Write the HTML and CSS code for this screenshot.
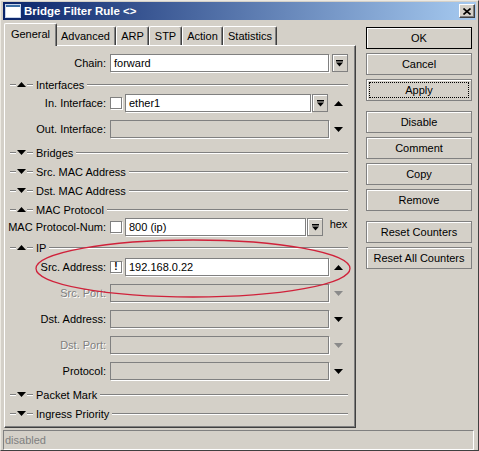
FILE: index.html
```html
<!doctype html>
<html>
<head>
    <meta charset="utf-8">
    <title>Bridge Filter Rule</title>

<link rel="stylesheet" href="styles.css">

</head>
<body>

<div class="win">
    <div class="title">
        <svg class="ico" width="16" height="14" viewBox="0 0 16 14"><rect x="0.5" y="0.5" width="15" height="13" fill="#fff" stroke="#c8d4e8"/><rect x="1" y="1" width="14" height="2" fill="#3a6ea5"/></svg>
        <span class="ttl">Bridge Filter Rule &lt;&gt;</span>
        <span class="close"><svg width="8" height="7" viewBox="0 0 8 7"><path d="M0.5 0.5L7.5 6.5M7.5 0.5L0.5 6.5" stroke="#000" stroke-width="1.6"/></svg></span>
    </div>

    <div class="main">
        <div class="left">
            <ul class="tabs">
                <li class="on t-gen">General</li>
                <li class="t-adv">Advanced</li>
                <li class="t-arp">ARP</li>
                <li class="t-stp">STP</li>
                <li class="t-act">Action</li>
                <li class="t-sta">Statistics</li>
            </ul>
            <div class="panel">
                <div class="row first">
                    <span class="lbl">Chain:</span>
                    <div class="fld"><span class="inp">forward</span></div>
                    <span class="tail left"><span class="dd"><svg width="7" height="7" viewBox="0 0 7 7"><rect x="0" y="0" width="7" height="1.5"/><polygon points="0,2.5 7,2.5 3.5,6.5"/></svg></span></span>
                </div>

                <div class="sec s-if"><i class="ln s"></i><svg width="9" height="5" viewBox="0 0 9 5"><polygon points="0,5 4.5,0 9,5"/></svg><i class="ln s"></i><span class="nm">Interfaces</span><i class="ln f"></i></div>
                <div class="row flush">
                    <span class="lbl">In. Interface:</span>
                    <div class="fld"><span class="cb"></span><span class="inp">ether1</span><span class="dd r1"><svg width="7" height="7" viewBox="0 0 7 7"><rect x="0" y="0" width="7" height="1.5"/><polygon points="0,2.5 7,2.5 3.5,6.5"/></svg></span></div>
                    <span class="tail"><svg width="9" height="5" viewBox="0 0 9 5"><polygon points="0,5 4.5,0 9,5"/></svg></span>
                </div>
                <div class="row">
                    <span class="lbl">Out. Interface:</span>
                    <div class="fld"><span class="inp off"></span></div>
                    <span class="tail"><svg width="9" height="5" viewBox="0 0 9 5"><polygon points="0,0 9,0 4.5,5"/></svg></span>
                </div>

                <div class="sec s-br"><i class="ln s"></i><svg width="9" height="5" viewBox="0 0 9 5"><polygon points="0,0 9,0 4.5,5"/></svg><i class="ln s"></i><span class="nm">Bridges</span><i class="ln f"></i></div>
                <div class="sec"><i class="ln s"></i><svg width="9" height="5" viewBox="0 0 9 5"><polygon points="0,0 9,0 4.5,5"/></svg><i class="ln s"></i><span class="nm">Src. MAC Address</span><i class="ln f"></i></div>
                <div class="sec"><i class="ln s"></i><svg width="9" height="5" viewBox="0 0 9 5"><polygon points="0,0 9,0 4.5,5"/></svg><i class="ln s"></i><span class="nm">Dst. MAC Address</span><i class="ln f"></i></div>
                <div class="sec"><i class="ln s"></i><svg width="9" height="5" viewBox="0 0 9 5"><polygon points="0,5 4.5,0 9,5"/></svg><i class="ln s"></i><span class="nm">MAC Protocol</span><i class="ln f"></i></div>
                <div class="row pull">
                    <span class="lbl">MAC Protocol-Num:</span>
                    <div class="fld"><span class="cb"></span><span class="inp">800 (ip)</span><span class="dd r6"><svg width="7" height="7" viewBox="0 0 7 7"><rect x="0" y="0" width="7" height="1.5"/><polygon points="0,2.5 7,2.5 3.5,6.5"/></svg></span></div>
                    <span class="tail left">hex</span>
                </div>

                <div class="sec s-ip"><i class="ln s"></i><svg width="9" height="5" viewBox="0 0 9 5"><polygon points="0,5 4.5,0 9,5"/></svg><i class="ln s"></i><span class="nm">IP</span><i class="ln f"></i></div>
                <div class="row near">
                    <span class="lbl">Src. Address:</span>
                    <div class="fld"><span class="cb not">!</span><span class="inp">192.168.0.22</span></div>
                    <span class="tail"><svg width="9" height="5" viewBox="0 0 9 5"><polygon points="0,5 4.5,0 9,5"/></svg></span>
                </div>
                <div class="row">
                    <span class="lbl off">Src. Port:</span>
                    <div class="fld"><span class="inp off"></span></div>
                    <span class="tail"><svg width="9" height="5" viewBox="0 0 9 5"><polygon points="0,0 9,0 4.5,5" fill="#8a8a8a"/></svg></span>
                </div>
                <div class="row">
                    <span class="lbl">Dst. Address:</span>
                    <div class="fld"><span class="inp off"></span></div>
                    <span class="tail"><svg width="9" height="5" viewBox="0 0 9 5"><polygon points="0,0 9,0 4.5,5"/></svg></span>
                </div>
                <div class="row">
                    <span class="lbl off">Dst. Port:</span>
                    <div class="fld"><span class="inp off"></span></div>
                    <span class="tail"><svg width="9" height="5" viewBox="0 0 9 5"><polygon points="0,0 9,0 4.5,5" fill="#8a8a8a"/></svg></span>
                </div>
                <div class="row">
                    <span class="lbl">Protocol:</span>
                    <div class="fld"><span class="inp off"></span></div>
                    <span class="tail"><svg width="9" height="5" viewBox="0 0 9 5"><polygon points="0,0 9,0 4.5,5"/></svg></span>
                </div>

                <div class="sec s-pm"><i class="ln s"></i><svg width="9" height="5" viewBox="0 0 9 5"><polygon points="0,0 9,0 4.5,5"/></svg><i class="ln s"></i><span class="nm">Packet Mark</span><i class="ln f"></i></div>
                <div class="sec"><i class="ln s"></i><svg width="9" height="5" viewBox="0 0 9 5"><polygon points="0,0 9,0 4.5,5"/></svg><i class="ln s"></i><span class="nm">Ingress Priority</span><i class="ln f"></i></div>
            </div>
        </div>

        <div class="side">
            <span class="btn def">OK</span>
            <span class="btn">Cancel</span>
            <span class="btn focus">Apply</span>
            <span class="btn gap">Disable</span>
            <span class="btn">Comment</span>
            <span class="btn">Copy</span>
            <span class="btn">Remove</span>
            <span class="btn gap">Reset Counters</span>
            <span class="btn">Reset All Counters</span>
        </div>
    </div>

    <div class="status">disabled</div>

    <svg class="mark" width="479" height="451" viewBox="0 0 479 451"><ellipse cx="193" cy="268.5" rx="157" ry="28.5" fill="none" stroke="#d0213a" stroke-width="1.3"/></svg>
</div>

</body>
</html>
```

FILE: styles.css
```css
*{margin: 0; padding: 0; box-sizing: border-box;}
html,body{width: 100%; height: 100%; overflow: hidden;}
body{background: #d4d0c8; font: 11px "Liberation Sans", Arial, sans-serif; color: #000;}

.win{position: relative; display: flex; flex-direction: column; width: 479px; height: 451px; padding: 1px 2px 0; border: 1px solid; border-color: #ece9e2 #404040 #404040 #ece9e2;}

/* title bar */
.title{display: flex; align-items: center; height: 18px; padding-left: 2px; background: linear-gradient(to right, #0a246a, #a6caf0); color: #fff; font-weight: bold; font-size: 11.5px;}
.title .ico{margin-right: 3px;}
.title .ttl{flex: 1;}
.close{display: flex; align-items: center; justify-content: center; width: 16px; height: 14px; margin-right: 1px; background: #d4d0c8; border: 1px solid; border-color: #fff #404040 #404040 #fff; box-shadow: inset -1px -1px 0 #808080;}

.main{flex: 1; display: flex; padding: 2px 0 0 1px;}
.left{display: flex; flex-direction: column; width: 352px;}

/* tabs */
.tabs{display: flex; align-items: flex-end; height: 23px; padding-left: 2px; list-style: none;}
.tabs li{position: relative; height: 19px; line-height: 18px; text-align: center; background: #d4d0c8; border: 1px solid; border-bottom: 0; border-color: #fff #404040 #fff #fff; box-shadow: inset -1px 0 0 #808080; border-radius: 2px 2px 0 0;}
.tabs li.on{z-index: 2; height: 23px; margin: 0 -2px -1px; line-height: 20px;}
.t-gen{width: 49px;}
.tabs li.t-gen{width: 53px;}
.t-adv{width: 61px;}
.t-arp{width: 33px;}
.t-stp{width: 33px;}
.t-act{width: 41px;}
.t-sta{width: 54px;}

/* panel */
.panel{flex: 1; display: flex; flex-direction: column; padding: 0 7px 0 0; border: 1px solid; border-color: #fff #404040 #404040 #fff; box-shadow: inset -1px -1px 0 #808080;}

.row{display: flex; align-items: center; height: 18px; margin-top: 8px; flex-shrink: 0;}
.row.first{margin-top: 8px;}
.row.flush{margin-top: 0;}
.row.pull{margin-top: -1px;}
.row.near{margin-top: 1px;}
.lbl{width: 101px; margin-right: 4px; text-align: right; white-space: nowrap;}
.lbl.off{color: #808080; text-shadow: 1px 1px 0 #fff;}
.fld{display: flex; align-items: center; width: 219px; height: 18px;}
.inp{flex: 1; height: 18px; padding-left: 3px; line-height: 16px; background: #fff; border: 1px solid #808080; box-shadow: 1px 1px 0 #fff; white-space: nowrap; overflow: hidden;}
.inp.off{background: #d4d0c8;}
.cb{width: 12px; height: 12px; margin-right: 3px; background: #fff; border: 1px solid #808080; box-shadow: 1px 1px 0 #fff; font-weight: bold; font-size: 10px; line-height: 10px; text-align: center;}
.dd{display: flex; align-items: center; justify-content: center; width: 16px; height: 18px; margin-left: 1px; background: #d4d0c8; border: 1px solid #808080; box-shadow: inset 1px 1px 0 #fff;}
.dd.r1{margin-right: 1px;}
.dd.r6{margin-right: 6px;}
.tail{display: flex; align-items: center; justify-content: center; width: 19px; height: 18px;}
.tail.left{justify-content: flex-start; padding-left: 0;}
.tail.left .dd{margin-left: 2px;}

/* collapsible section headers */
.sec{display: flex; align-items: center; height: 19px; padding-left: 5px; flex-shrink: 0;}
.sec .ln{display: block; height: 2px; border-top: 1px solid #808080; border-bottom: 1px solid #fff;}
.sec .ln.s{width: 6px;}
.sec .ln.f{flex: 1; margin-left: 3px;}
.sec svg{margin: 0 1px;}
.sec .nm{margin-left: 3px; white-space: nowrap;}
.s-if{margin-top: 3px;}
.s-br{margin-top: 5px;}
.s-ip{margin-top: 2px;}
.s-pm{margin-top: 5px;}

/* buttons */
.side{display: flex; flex-direction: column; width: 106px; margin-left: 10px; padding-top: 5px;}
.btn{display: flex; align-items: center; justify-content: center; height: 22px; margin-bottom: 4px; border: 1px solid #808080; box-shadow: inset 1px 1px 0 #fff; white-space: nowrap;}
.btn.def{border-color: #000;}
.btn.focus{outline: 1px dotted #000; outline-offset: -4px;}
.btn.gap{margin-top: 6px;}

.status{height: 20px; margin: 2px 2px 0 0; padding-left: 1px; line-height: 18px; color: #808080; border: 1px solid; border-color: #808080 #fff #fff #808080;}

.mark{position: absolute; left: -1px; top: -1px; pointer-events: none;}
```
